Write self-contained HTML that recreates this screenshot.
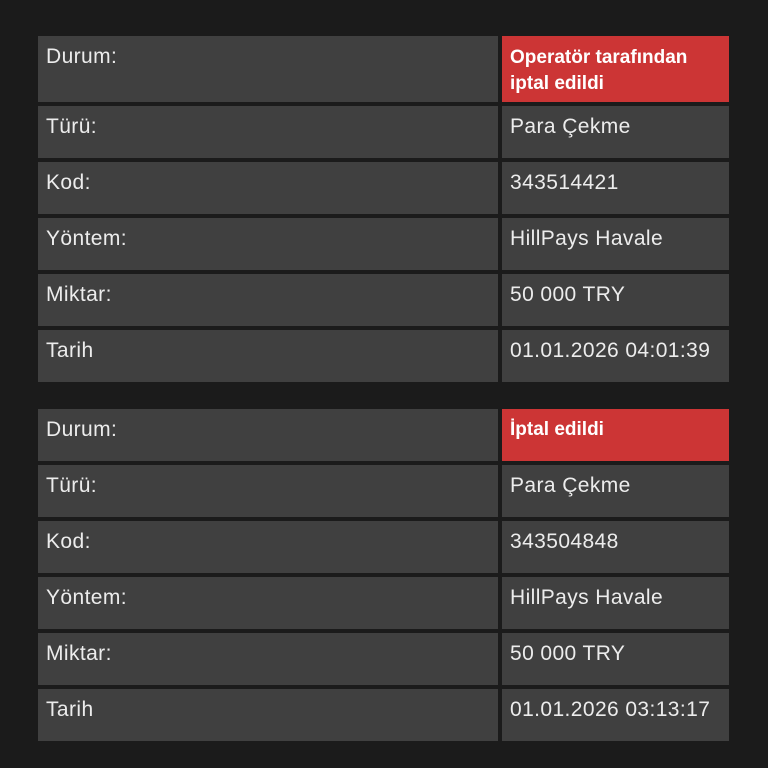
<!DOCTYPE html>
<html><head><meta charset="utf-8"><style>
body{margin:0;width:768px;height:768px;background:#1b1b1b;font-family:"Liberation Sans",sans-serif;position:relative;overflow:hidden}
.c{position:absolute;background:#404040;color:#ececec;font-size:21px;letter-spacing:0.4px;line-height:26px;box-sizing:border-box;padding:8px 8px 0}
.l{left:38px;width:460px}
.r{left:502px;width:227px}
.red{background:#cc3535;color:#fff;font-weight:bold;font-size:19px;letter-spacing:0px;line-height:26px}
</style></head><body>
<div class="c l" style="top:36px;height:66px">Durum:</div>
<div class="c r red" style="top:36px;height:66px;padding-top:9px">Operatör tarafından iptal edildi</div>
<div class="c l" style="top:106px;height:52px">Türü:</div>
<div class="c r" style="top:106px;height:52px">Para Çekme</div>
<div class="c l" style="top:162px;height:52px">Kod:</div>
<div class="c r" style="top:162px;height:52px">343514421</div>
<div class="c l" style="top:218px;height:52px">Yöntem:</div>
<div class="c r" style="top:218px;height:52px">HillPays Havale</div>
<div class="c l" style="top:274px;height:52px">Miktar:</div>
<div class="c r" style="top:274px;height:52px">50 000 TRY</div>
<div class="c l" style="top:330px;height:52px">Tarih</div>
<div class="c r" style="top:330px;height:52px">01.01.2026 04:01:39</div>

<div class="c l" style="top:409px;height:52px">Durum:</div>
<div class="c r red" style="top:409px;height:52px;padding-top:8px">İptal edildi</div>
<div class="c l" style="top:465px;height:52px">Türü:</div>
<div class="c r" style="top:465px;height:52px">Para Çekme</div>
<div class="c l" style="top:521px;height:52px">Kod:</div>
<div class="c r" style="top:521px;height:52px">343504848</div>
<div class="c l" style="top:577px;height:52px">Yöntem:</div>
<div class="c r" style="top:577px;height:52px">HillPays Havale</div>
<div class="c l" style="top:633px;height:52px">Miktar:</div>
<div class="c r" style="top:633px;height:52px">50 000 TRY</div>
<div class="c l" style="top:689px;height:52px">Tarih</div>
<div class="c r" style="top:689px;height:52px">01.01.2026 03:13:17</div>
</body></html>
